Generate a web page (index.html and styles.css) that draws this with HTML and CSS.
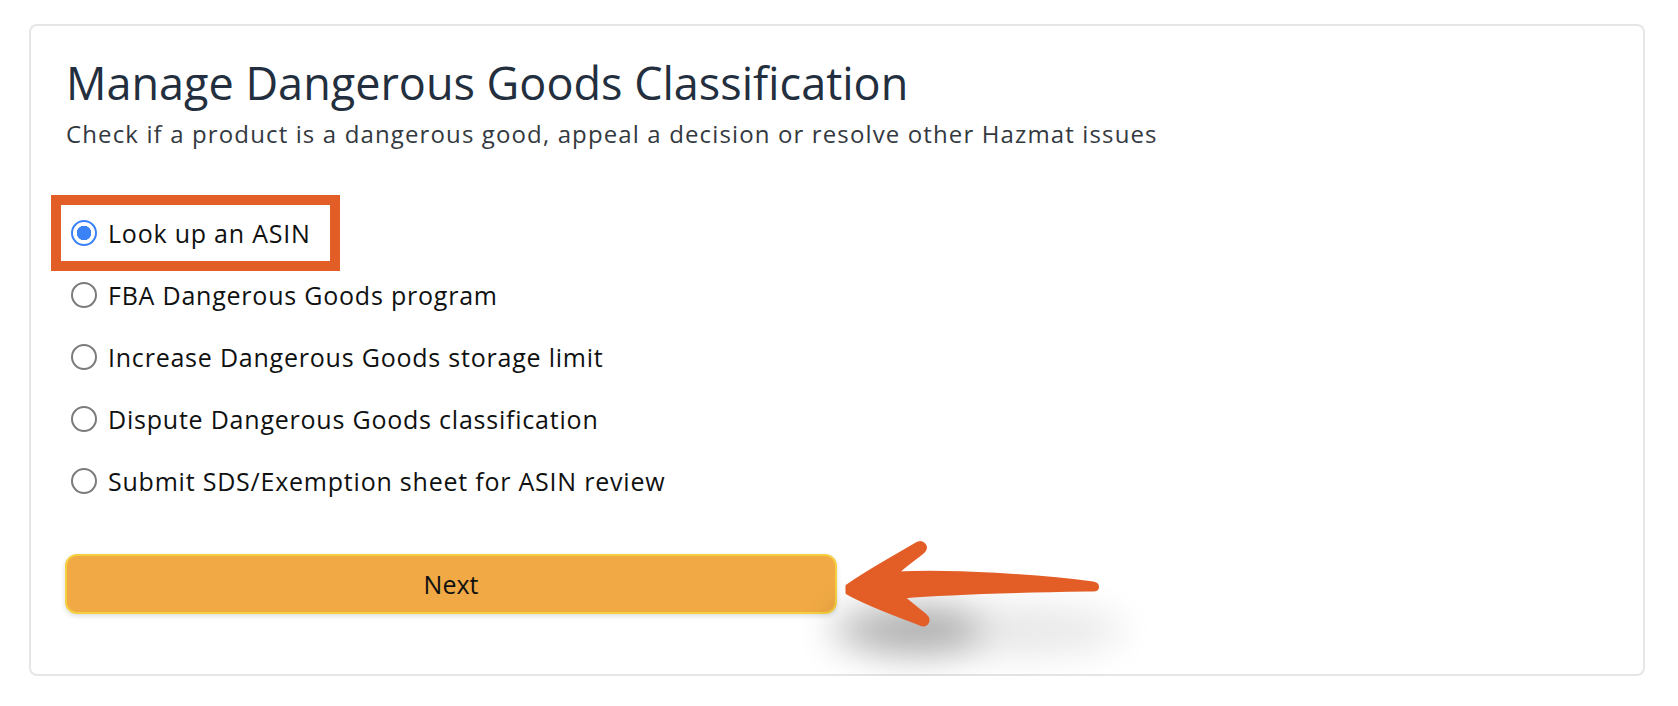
FILE: index.html
```html
<!DOCTYPE html>
<html lang="en">
<head>
  <meta charset="UTF-8" />
  <meta name="viewport" content="width=device-width, initial-scale=1.0" />
  <title>Manage Dangerous Goods Classification</title>
  <link rel="stylesheet" href="styles.css">
</head>
<body>
  <div class="card">
    <h1 class="title">Manage Dangerous Goods Classification</h1>
    <p class="subtitle">Check if a product is a dangerous good, appeal a decision or resolve other Hazmat issues</p>

    <div class="options">
      <label class="option highlighted">
        <input type="radio" name="issue" checked />
        <span>Look up an ASIN</span>
      </label>
      <label class="option">
        <input type="radio" name="issue" />
        <span>FBA Dangerous Goods program</span>
      </label>
      <label class="option">
        <input type="radio" name="issue" />
        <span>Increase Dangerous Goods storage limit</span>
      </label>
      <label class="option">
        <input type="radio" name="issue" />
        <span>Dispute Dangerous Goods classification</span>
      </label>
      <label class="option">
        <input type="radio" name="issue" />
        <span>Submit SDS/Exemption sheet for ASIN review</span>
      </label>
    </div>

    <div class="actions">
      <button class="next-btn">Next</button>
      <svg class="arrow" width="360" height="190" viewBox="0 0 360 190">
        <defs>
          <filter id="soft" x="-50%" y="-100%" width="200%" height="300%">
            <feGaussianBlur stdDeviation="18" />
          </filter>
        </defs>
        <ellipse cx="195" cy="110" rx="130" ry="26" fill="#000" opacity="0.09" filter="url(#soft)" />
        <ellipse cx="105" cy="110" rx="75" ry="24" fill="#000" opacity="0.26" filter="url(#soft)" />
        <path fill="#e35d26" stroke="#e35d26" stroke-width="3" stroke-linejoin="round"
          d="M 46 66 C 65 52, 95 36, 115 24 C 122 20, 128 27, 122 32 C 112 40, 102 47, 96 53
             C 150 50, 240 56, 292 63 C 298 64, 298 70, 292 70 C 230 71, 160 72, 102 77
             C 110 84, 118 90, 124 95 C 130 100, 126 107, 119 104 C 95 95, 65 84, 46 73 Z" />
      </svg>
    </div>
  </div>
</body>
</html>
```

FILE: styles.css
```css
body {
  margin: 0;
  font-family: "Open Sans", "Liberation Sans", sans-serif;
  background: #fff;
}

.card {
  margin: 24px 0 0 29px;
  width: 1616px;
  box-sizing: border-box;
  border: 2px solid #e6e6e6;
  border-radius: 8px;
  padding: 31px 35px 60px 35px;
}

.title {
  margin: 0;
  font-size: 45px;
  line-height: 52px;
  font-weight: 400;
  color: #232f3e;
}

.subtitle {
  margin: 10px 0 0 0;
  font-size: 24px;
  line-height: 30px;
  color: #33393f;
  letter-spacing: 1.13px;
}

.options {
  margin-top: 53px;
  display: flex;
  flex-direction: column;
}

.option {
  position: relative;
  display: flex;
  align-items: center;
  gap: 11px;
  height: 62px;
  margin-left: 5px;
  font-size: 25px;
  color: #0f1111;
  letter-spacing: 0.78px;
}

.option input {
  appearance: none;
  -webkit-appearance: none;
  margin: 0;
  width: 26px;
  height: 26px;
  border-radius: 50%;
  border: 2px solid #7b7b7b;
  background: #fff;
  box-sizing: border-box;
}

.option input:checked {
  border: 2px solid #3b82f6;
  background: radial-gradient(circle, #3b82f6 0 7px, #fff 7.5px);
}

.highlighted::after {
  content: "";
  position: absolute;
  left: -20px;
  top: -7px;
  width: 289px;
  height: 76px;
  box-sizing: border-box;
  border: 10px solid #e35d26;
}

.actions {
  position: relative;
  margin-top: 42px;
}

.next-btn {
  display: block;
  width: 772px;
  height: 60px;
  margin-left: -1px;
  border: 2px solid #f5cf3f;
  border-radius: 12px;
  background: #f0a944;
  color: #0f1111;
  font-family: inherit;
  font-size: 25px;
  box-shadow: 0 2px 5px rgba(15, 17, 17, 0.15);
}

.arrow {
  position: absolute;
  left: 735px;
  top: -34px;
}
```
